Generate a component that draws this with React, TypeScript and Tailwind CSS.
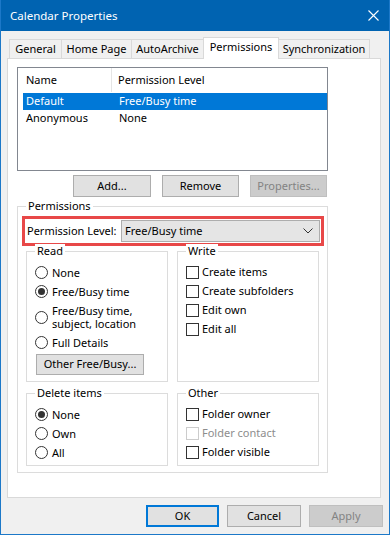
import type { ReactNode } from 'react';

const font = { fontFamily: '"Segoe UI", "Noto Sans", sans-serif' };

function Radio({ checked, children }: { checked?: boolean; children: ReactNode }) {
  return (
    <div className="flex items-center gap-[4px]">
      <span className="w-[13px] h-[13px] shrink-0 rounded-full border border-[#333] bg-white flex items-center justify-center">
        {checked && <span className="w-[7px] h-[7px] rounded-full bg-[#333]" />}
      </span>
      <span className="leading-[13px]">{children}</span>
    </div>
  );
}

function Check({ disabled, children }: { disabled?: boolean; children: ReactNode }) {
  return (
    <div className="flex items-center gap-[3px] h-[19px]">
      <span
        className={
          disabled
            ? 'w-[13px] h-[13px] shrink-0 border border-[#cccccc] bg-white'
            : 'w-[13px] h-[13px] shrink-0 border border-[#333] bg-white'
        }
      />
      <span className={disabled ? 'text-[#8d8d8d]' : ''}>{children}</span>
    </div>
  );
}

function Group({ label, className, children }: { label: string; className: string; children: ReactNode }) {
  return (
    <div className={'relative border border-[#dcdcdc] ' + className}>
      <span className="absolute -top-[8px] left-[8px] bg-white px-[2px] leading-[14px]">{label}</span>
      {children}
    </div>
  );
}

function Btn({ children, disabled, primary, w }: { children: ReactNode; disabled?: boolean; primary?: boolean; w: string }) {
  let cls = 'h-[22px] flex items-center justify-center border ';
  if (disabled) cls += 'bg-[#cccccc] border-[#bfbfbf] text-[#838383]';
  else if (primary) cls += 'bg-[#e1e1e1] border-2 border-[#0078d7]';
  else cls += 'bg-[#e1e1e1] border-[#adadad]';
  return <div className={cls + ' ' + w}>{children}</div>;
}

export default function App() {
  const tabs = [
    { name: 'General', w: 'w-[53px]' },
    { name: 'Home Page', w: 'w-[71px]' },
    { name: 'AutoArchive', w: 'w-[73px]' },
    { name: 'Permissions', w: 'w-[76px]', active: true },
    { name: 'Synchronization', w: 'w-[92px]' },
  ];

  return (
    <div
      className="w-[390px] h-[535px] bg-[#f0f0f0] border-x border-b border-[#1c78c8] text-[11px] text-black flex flex-col overflow-hidden"
      style={font}
    >
      {/* title bar */}
      <div className="h-[31px] -mx-px bg-[#0063b1] text-white flex items-center justify-between pl-[10px] pr-[11px] shrink-0">
        <span className="text-[11.5px]">Calendar Properties</span>
        <svg width="11" height="11" viewBox="0 0 11 11" className="text-white">
          <path d="M0.5 0.5 L10.5 10.5 M10.5 0.5 L0.5 10.5" stroke="currentColor" strokeWidth="1.1" />
        </svg>
      </div>

      {/* tabs */}
      <div className="mt-[6px] ml-[8px] h-[22px] flex items-start">
        {tabs.map((t, i) =>
          t.active ? (
            <div
              key={t.name}
              className={`relative z-10 -ml-px h-[22px] bg-white border-x border-t border-[#d9d9d9] flex items-center justify-center pb-[2px] ${t.w}`}
            >
              {t.name}
            </div>
          ) : (
            <div
              key={t.name}
              className={`mt-[2px] h-[19px] bg-[#f0f0f0] border-x border-t border-[#d9d9d9] flex items-center justify-center ${i > 0 ? '-ml-px' : ''} ${t.w}`}
            >
              {t.name}
            </div>
          )
        )}
      </div>

      {/* panel */}
      <div className="-mt-px ml-[6px] w-[374px] h-[440px] bg-white border border-[#d9d9d9] pl-[9px] pt-[8px]">
        {/* list */}
        <div className="w-[311px] h-[104px] border border-[#828790]">
          <div className="h-[24px] flex">
            <div className="w-[94px] border-r border-[#e5e5e5] pl-[8px] flex items-center">Name</div>
            <div className="pl-[6px] flex items-center">Permission Level</div>
          </div>
          <div className="ml-[5px] w-[304px] h-[17px] mt-px bg-[#0078d7] text-white flex items-center">
            <span className="w-[96px] pl-[3px]">Default</span>
            <span>Free/Busy time</span>
          </div>
          <div className="ml-[5px] w-[304px] h-[17px] flex items-center">
            <span className="w-[96px] pl-[3px]">Anonymous</span>
            <span>None</span>
          </div>
        </div>

        <div className="mt-[4px] w-[310px] flex justify-end gap-[11px]">
          <Btn w="w-[78px]">Add...</Btn>
          <Btn w="w-[77px]">Remove</Btn>
          <Btn w="w-[77px]" disabled>
            Properties...
          </Btn>
        </div>

        {/* permissions group */}
        <Group label="Permissions" className="mt-[9px] w-[311px] h-[267px]">
          <div className="ml-[4px] mt-[9px] w-[302px] h-[30px] border-[3px] border-[#e84848] flex items-center pl-[2px]">
            <span className="w-[94px]">Permission Level:</span>
            <div className="w-[199px] h-[22px] bg-[#e5e5e5] border border-[#adadad] flex items-center justify-between pl-[3px] pr-[6px]">
              <span>Free/Busy time</span>
              <svg width="10" height="6" viewBox="0 0 10 6">
                <path d="M0.5 0.5 L5 5 L9.5 0.5" stroke="#333" strokeWidth="1" fill="none" />
              </svg>
            </div>
          </div>

          <div className="ml-[8px] mt-[5px] flex gap-[9px]">
            <Group label="Read" className="w-[142px] h-[131px]">
              <div className="pt-[11px] pl-[8px] flex flex-col">
                <div className="h-[19px] flex items-center">
                  <Radio>None</Radio>
                </div>
                <div className="h-[19px] flex items-center">
                  <Radio checked>Free/Busy time</Radio>
                </div>
                <div className="h-[32px] flex items-center">
                  <Radio>
                    Free/Busy time,
                    <br />
                    subject, location
                  </Radio>
                </div>
                <div className="h-[19px] flex items-center">
                  <Radio>Full Details</Radio>
                </div>
                <div className="mt-[2px] ml-px w-[108px] h-[21px] bg-[#e1e1e1] border border-[#adadad] flex items-center justify-center">
                  Other Free/Busy...
                </div>
              </div>
            </Group>
            <Group label="Write" className="w-[142px] h-[131px]">
              <div className="pt-[11px] pl-[8px] flex flex-col">
                <Check>Create items</Check>
                <Check>Create subfolders</Check>
                <Check>Edit own</Check>
                <Check>Edit all</Check>
              </div>
            </Group>
          </div>

          <div className="ml-[8px] mt-[11px] flex gap-[9px]">
            <Group label="Delete items" className="w-[142px] h-[73px]">
              <div className="pt-[11px] pl-[8px] flex flex-col">
                <div className="h-[19px] flex items-center">
                  <Radio checked>None</Radio>
                </div>
                <div className="h-[19px] flex items-center">
                  <Radio>Own</Radio>
                </div>
                <div className="h-[19px] flex items-center">
                  <Radio>All</Radio>
                </div>
              </div>
            </Group>
            <Group label="Other" className="w-[142px] h-[73px]">
              <div className="pt-[11px] pl-[8px] flex flex-col">
                <Check>Folder owner</Check>
                <Check disabled>Folder contact</Check>
                <Check>Folder visible</Check>
              </div>
            </Group>
          </div>
        </Group>
      </div>

      {/* dialog buttons */}
      <div className="mt-[7px] pr-[6px] flex justify-end gap-[8px]">
        <Btn w="w-[73px]" primary>
          OK
        </Btn>
        <Btn w="w-[74px]">Cancel</Btn>
        <Btn w="w-[74px]" disabled>
          Apply
        </Btn>
      </div>
    </div>
  );
}
